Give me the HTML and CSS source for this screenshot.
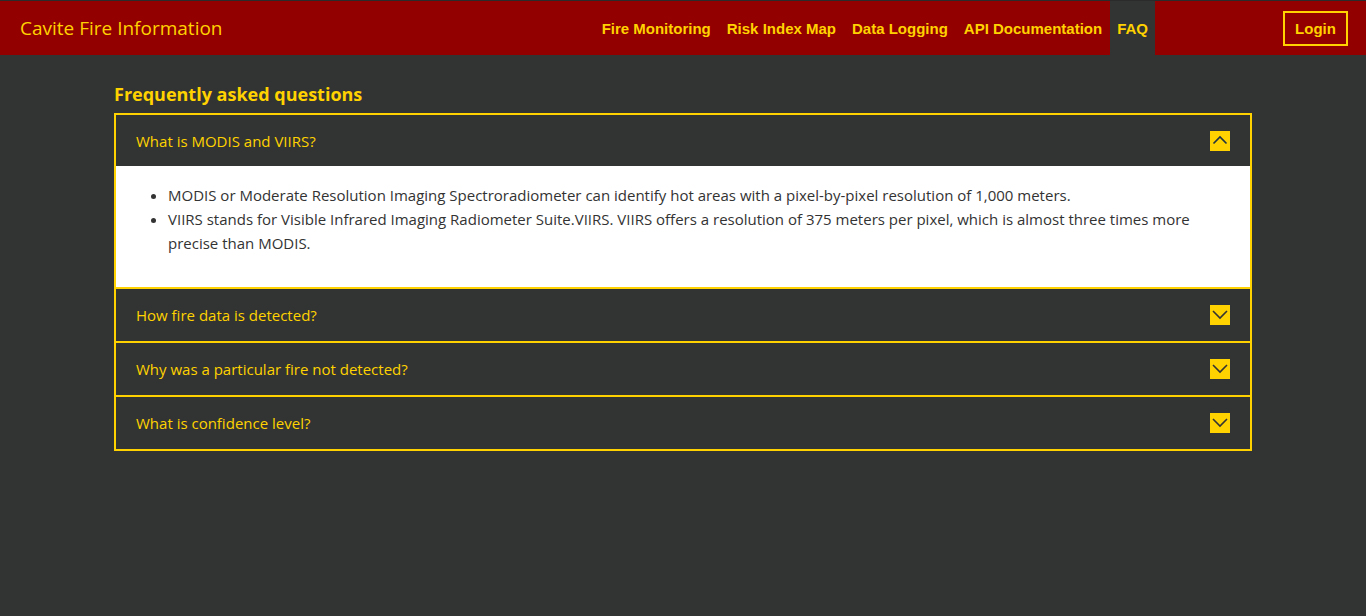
FILE: index.html
```html
<!DOCTYPE html>
<html>
<head>
<meta charset="utf-8">
<title>FAQ - Cavite Fire Information</title>
<link rel="stylesheet" href="styles.css">
</head>
<body>
<header class="navbar">
  <a class="brand" href="#">Cavite Fire Information</a>
  <nav class="nav">
    <a class="nav-link" href="#">Fire Monitoring</a>
    <a class="nav-link" href="#">Risk Index Map</a>
    <a class="nav-link" href="#">Data Logging</a>
    <a class="nav-link" href="#">API Documentation</a>
    <a class="nav-link active" href="#">FAQ</a>
  </nav>
  <a class="login" href="#">Login</a>
</header>
<main class="container">
  <h1 class="title">Frequently asked questions</h1>
  <div class="accordion">
    <div class="item open">
      <div class="head">
        <span>What is MODIS and VIIRS?</span>
        <span class="toggle"><svg width="20" height="20" viewBox="0 0 20 20"><path d="M3.5 12.5 L10 6 L16.5 12.5" fill="none" stroke="#1f3340" stroke-width="1.6"/></svg></span>
      </div>
      <div class="body">
        <ul>
          <li>MODIS or Moderate Resolution Imaging Spectroradiometer can identify hot areas with a pixel-by-pixel resolution of 1,000 meters.</li>
          <li>VIIRS stands for Visible Infrared Imaging Radiometer Suite.VIIRS. VIIRS offers a resolution of 375 meters per pixel, which is almost three times more precise than MODIS.</li>
        </ul>
      </div>
    </div>
    <div class="item">
      <div class="head">
        <span>How fire data is detected?</span>
        <span class="toggle"><svg width="20" height="20" viewBox="0 0 20 20"><path d="M3 6 L10 13 L17 6" fill="none" stroke="#333" stroke-width="1.6"/></svg></span>
      </div>
    </div>
    <div class="item">
      <div class="head">
        <span>Why was a particular fire not detected?</span>
        <span class="toggle"><svg width="20" height="20" viewBox="0 0 20 20"><path d="M3 6 L10 13 L17 6" fill="none" stroke="#333" stroke-width="1.6"/></svg></span>
      </div>
    </div>
    <div class="item">
      <div class="head">
        <span>What is confidence level?</span>
        <span class="toggle"><svg width="20" height="20" viewBox="0 0 20 20"><path d="M3 6 L10 13 L17 6" fill="none" stroke="#333" stroke-width="1.6"/></svg></span>
      </div>
    </div>
  </div>
</main>
</body>
</html>
```
FILE: styles.css
```css
* { box-sizing: border-box; }
html, body { margin: 0; padding: 0; }
body {
  background: #323433;
  font-family: "Open Sans", "Noto Sans", sans-serif;
  color: #ffd200;
  min-height: 616px;
  border-top: 1px solid #2b2b2b;
}
a { text-decoration: none; color: inherit; }
.navbar {
  display: flex;
  align-items: center;
  height: 54px;
  background: #920000;
  padding: 0 18px 0 20px;
}
.brand {
  font-size: 19px;
  color: #ffd200;
  flex: 1;
}
.nav {
  display: flex;
  height: 100%;
  margin-right: 128px;
}
.nav-link {
  display: flex;
  align-items: center;
  padding: 0 8px;
  font-family: "Liberation Sans", sans-serif;
  font-weight: bold;
  font-size: 15px;
  color: #ffd200;
}
.nav-link.active { background: #323433; padding: 0 7px; }
.login {
  border: 2px solid #ffd200;
  height: 35px;
  width: 65px;
  justify-content: center;
  display: flex;
  align-items: center;
  font-family: "Liberation Sans", sans-serif;
  font-weight: bold;
  font-size: 15px;
}
.container {
  width: 1138px;
  margin: 0 auto;
  padding-top: 26px;
}
.title {
  margin: 0 0 6px 0;
  font-size: 18px;
  font-weight: bold;
  line-height: 26px;
}
.accordion {
  border: 2px solid #ffd200;
}
.item + .item { border-top: 2px solid #ffd200; }
.head {
  display: flex;
  justify-content: space-between;
  align-items: center;
  height: 52px;
  padding: 0 20px;
  font-size: 15px;
}
.item.open .head { height: 51px; }
.toggle {
  width: 20px;
  height: 20px;
  background: #ffd200;
  display: block;
}
.toggle svg { display: block; }
.body {
  background: #ffffff;
  color: #333333;
  font-size: 15px;
  line-height: 24px;
  height: 121px;
  padding: 17px 40px 0 20px;
}
.body ul { margin: 0; padding-left: 32px; }
```
